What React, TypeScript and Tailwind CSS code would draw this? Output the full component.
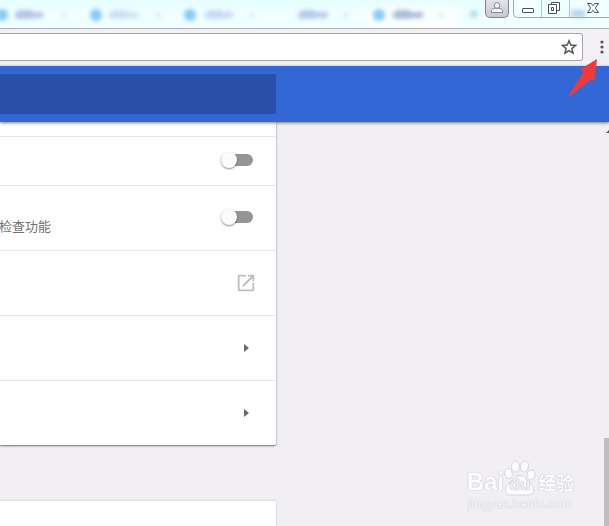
import type { ReactNode } from 'react'

type BlurredTab = {
  x: number
  icon: boolean
  textX: number
  textWidth: number
  tone: string
}

const blurredTabs: BlurredTab[] = [
  { x: 2, icon: true, textX: 15, textWidth: 28, tone: '#b4c6e8' },
  { x: 96, icon: true, textX: 109, textWidth: 29, tone: '#cbe2f3' },
  { x: 190, icon: true, textX: 205, textWidth: 28, tone: '#c6daf5' },
  { x: 284, icon: false, textX: 298, textWidth: 30, tone: '#b4cceb' },
  { x: 379, icon: true, textX: 393, textWidth: 30, tone: '#aabed6' },
]

function TabStrip() {
  return (
    <div className="relative flex h-7 justify-end overflow-hidden bg-[#f0ffff]">
      <svg aria-hidden="true" className="absolute left-0 top-0 h-7 w-[609px]">
        <defs>
          <filter
            id="soft"
            x="-50%"
            y="-50%"
            width="200%"
            height="200%"
            colorInterpolationFilters="sRGB"
          >
            <feGaussianBlur stdDeviation="2" />
          </filter>
          <filter id="wide" x="-20%" y="-50%" width="140%" height="200%">
            <feGaussianBlur stdDeviation="4" />
          </filter>
        </defs>
        <g filter="url(#wide)">
          <rect x="0" y="0" width="484" height="4" fill="#d6fbfd" />
          <rect x="368" y="5" width="90" height="25" fill="#fcffff" />
        </g>
        <g filter="url(#soft)">
          {blurredTabs.map((tab) => (
            <g key={tab.x}>
              {tab.icon && <circle cx={tab.x} cy="15" r="6" fill="#86caf7" />}
              <rect x={tab.textX} y="12" width={tab.textWidth} height="6" fill={tab.tone} />
              <rect x={tab.textX + 3} y="10" width="14" height="9" fill={tab.tone} />
              <circle cx={tab.x + 62} cy="15" r="3" fill="#d9f1f1" />
            </g>
          ))}
          <circle cx="474" cy="14" r="4" fill="#b4dbf5" />
          <rect x="571" y="10" width="14" height="7" fill="#b6cff0" />
        </g>
      </svg>
      <div className="relative flex h-[18px] items-stretch gap-1">
        <WindowButton
          className="w-6 rounded-b-[5px] border border-t-0 border-[#85858c] bg-linear-to-b from-[#e2e3e8] to-[#c8c9ce]"
          label="用户"
        >
          <svg className="size-4" viewBox="0 0 16 16" fill="#f8f8fa" stroke="#85858d">
            <path d="M2.500 12.500v-1.700c0-1.300 1.500-2.200 3.700-2.600h3.600c2.200.4 3.700 1.300 3.700 2.600v1.700z" />
            <circle cx="8" cy="5.500" r="2.800" />
          </svg>
        </WindowButton>
        <div className="flex rounded-bl-[5px] border-b border-l border-[#9aabb0]">
          <WindowButton className="w-7 border-r border-[#b5c8cc]" label="最小化">
            <svg className="size-4" viewBox="0 0 16 16" fill="#fff" stroke="#4c4f5c">
              <rect x="2.500" y="8.500" width="11" height="4" rx="0.500" />
            </svg>
          </WindowButton>
          <WindowButton className="w-7 border-r border-[#b5c8cc] pr-1" label="还原">
            <svg className="size-4" viewBox="0 0 16 16" fill="#fff" stroke="#4c4f5c">
              <path d="M5.500 2.500h8v8h-8z" />
              <path d="M2.500 4.500h8v9h-8z" />
              <path d="M5.500 7.500h2v3h-2z" />
            </svg>
          </WindowButton>
          <WindowButton className="w-[39px] pl-1.5" label="关闭">
            <svg className="size-4" viewBox="0 0 16 16" fill="#fff" stroke="#4c4f5c">
              <path d="M2.500 3.500h3.700L8 5.700l1.800-2.200h3.700L10.300 8l3.200 4.500H9.800L8 10.300l-1.800 2.200H2.500L5.700 8z" />
            </svg>
          </WindowButton>
        </div>
      </div>
    </div>
  )
}

function WindowButton({
  children,
  className,
  label,
}: {
  children: ReactNode
  className: string
  label: string
}) {
  return (
    <button
      aria-label={label}
      className={`flex items-center justify-center pb-0.5 ${className}`}
      type="button"
    >
      {children}
    </button>
  )
}

function Toolbar() {
  return (
    <div className="relative flex h-[38px] items-center border-t border-[#aeb0b4] bg-[#f2f0f5] pb-0.5">
      <div className="flex h-7 flex-1 items-center rounded-r-[3px] border border-l-0 border-[#a9a5aa] bg-white pr-[5px]">
        <input aria-label="地址栏" className="min-w-0 flex-1 outline-none" type="text" />
        <button aria-label="为此网页添加书签" type="button">
          <svg
            className="size-4"
            viewBox="0 0 16 16"
            fill="none"
            stroke="#55545a"
            strokeWidth="1.500"
          >
            <path d="M8 1.800l1.800 4.300 4.700.4-3.600 3.100 1.100 4.600L8 11.700l-4 2.500 1.100-4.600L1.500 6.500l4.700-.4z" />
          </svg>
        </button>
      </div>
      <button aria-label="菜单" className="ml-4 mr-1" type="button">
        <svg className="h-4 w-1.5" viewBox="0 0 6 16" fill="#55545a">
          <circle cx="3" cy="3" r="1.600" />
          <circle cx="3" cy="8" r="1.600" />
          <circle cx="3" cy="13" r="1.600" />
        </svg>
      </button>
      <svg
        aria-hidden="true"
        className="absolute right-2 top-[29px] z-20 h-10 w-9"
        viewBox="0 0 36 40"
        fill="#f03a3a"
      >
        <path d="M32 1L15 11.500l3.500 2.500L3 38.500 4.500 38.500 26 21.500l3.500 2z" />
      </svg>
    </div>
  )
}

function SettingsHeader() {
  return (
    <header className="relative z-10 grid h-14 grid-cols-[276fr_333fr] items-center bg-[#3367d6] shadow-[0_1px_3px_rgba(0,0,0,0.5)]">
      <input
        aria-label="搜索设置"
        className="h-10 w-full rounded-r-[2px] bg-[#2850a7] px-3 text-white outline-none"
        type="search"
      />
    </header>
  )
}

function SettingsRow({ children }: { children: ReactNode }) {
  return (
    <div className="flex h-[65px] items-center justify-end border-b border-[#e8e7ea] pr-[23px] last:h-16 last:border-b-0">
      {children}
    </div>
  )
}

function Toggle({ id, label }: { id?: string; label?: string }) {
  return (
    <input
      aria-label={label}
      className="relative mb-0.5 h-3 w-8 appearance-none rounded-full bg-[#969496] before:absolute before:-top-0.5 before:left-0 before:size-4 before:rounded-full before:bg-[#fbfafc] before:shadow-[0_1px_2px_rgba(0,0,0,0.45)]"
      id={id}
      role="switch"
      type="checkbox"
    />
  )
}

function ArrowButton() {
  return (
    <button aria-label="更多" className="mr-1" type="button">
      <svg className="h-2 w-[5px]" viewBox="0 0 5 8" fill="#69676b">
        <path d="M0 0l5 4-5 4z" />
      </svg>
    </button>
  )
}

function SettingsCard() {
  return (
    <section className="rounded-br-[2px] bg-white shadow-[0_1px_2px_rgba(0,0,0,0.55)]">
      <div className="h-[15px] border-b border-[#e8e7ea]" />
      <div className="flex h-[49px] items-center justify-end border-b border-[#e8e7ea] pr-[23px]">
        <Toggle label="开关" />
      </div>
      <SettingsRow>
        <label
          className="-ml-px mt-[18px] flex-1 text-[13px] leading-5 text-[#727074]"
          htmlFor="spelling"
        >
          检查功能
        </label>
        <Toggle id="spelling" />
      </SettingsRow>
      <SettingsRow>
        <a aria-label="打开" className="-mr-1" href="#open">
          <svg className="size-[22px]" viewBox="0 0 24 24" fill="#bfbcc1">
            <path d="M19 19H5V5h7V3H5c-1.110 0-2 .9-2 2v14c0 1.100.890 2 2 2h14c1.100 0 2-.9 2-2v-7h-2v7zM14 3v2h3.590l-9.830 9.830 1.410 1.410L19 6.410V10h2V3h-7z" />
          </svg>
        </a>
      </SettingsRow>
      <SettingsRow>
        <ArrowButton />
      </SettingsRow>
      <SettingsRow>
        <ArrowButton />
      </SettingsRow>
    </section>
  )
}

function Scrollbar() {
  return (
    <div aria-hidden="true" className="flex w-[5px] flex-col items-end justify-between">
      <svg className="mt-2 h-[3px] w-[3px]" viewBox="0 0 3 3" fill="#55545a">
        <path d="M0 3l3-3v3z" />
      </svg>
      <div className="h-[88px] w-full bg-[#c0bdc1]" />
    </div>
  )
}

function Watermark() {
  return (
    <div className="absolute bottom-3.5 right-[35px] flex flex-col items-center text-[#fdfdfe] [text-shadow:0_0_1px_#bebdc3,0_0_1px_#c6c5ca]">
      <div className="flex items-end font-bold">
        <span className="text-[24px] leading-7">Bai</span>
        <span className="relative flex h-9 w-8 items-end justify-center pb-px">
          <svg
            className="absolute inset-0 h-9 w-8"
            viewBox="0 0 32 36"
            fill="#fdfdfe"
            stroke="#d6d5da"
          >
            <ellipse cx="4.500" cy="13.500" rx="3.700" ry="5" transform="rotate(-8 4.500 13.500)" />
            <ellipse cx="11.500" cy="6.500" rx="4" ry="5.500" />
            <ellipse cx="20.500" cy="6.500" rx="4" ry="5.500" transform="rotate(12 20.500 6.500)" />
            <ellipse cx="27" cy="15" rx="3.800" ry="5" transform="rotate(15 27 15)" />
            <path d="M15.500 15.500c-4 0-5 3-7.500 5.500-3 2.500-6.500 4.500-6.500 8.500 0 4 3 5.500 6.500 5.500h15c4.500 0 6.500-2 6.500-5.500 0-4-3-6-5.500-8.500s-4-5.500-8.500-5.500z" />
          </svg>
          <span className="relative text-[17px] leading-5 text-[#f0eff3] [text-shadow:0_0_1px_#aeadb3,0_0_1px_#bebdc3]">
            du
          </span>
        </span>
        <span className="ml-0.5 text-[18px] leading-6">经验</span>
      </div>
      <span className="text-[13px] leading-4 text-[#f8f7fa] [text-shadow:0_0_1px_#c2c1c7,0_0_1px_#d6d5da]">
        jingyan.baidu.com
      </span>
    </div>
  )
}

export default function App() {
  return (
    <div className="flex min-h-screen flex-col bg-[#f1eff3] font-['Liberation_Sans','Noto_Sans_CJK_SC',sans-serif]">
      <TabStrip />
      <Toolbar />
      <SettingsHeader />
      <div className="relative flex flex-1">
        <main className="grid flex-1 grid-cols-[276fr_328fr]">
          <div className="flex flex-col">
            <SettingsCard />
            <section className="mt-14 flex-1 rounded-tr-[2px] bg-white shadow-[0_0_2px_rgba(0,0,0,0.25)]" />
          </div>
        </main>
        <Watermark />
        <Scrollbar />
      </div>
    </div>
  )
}
